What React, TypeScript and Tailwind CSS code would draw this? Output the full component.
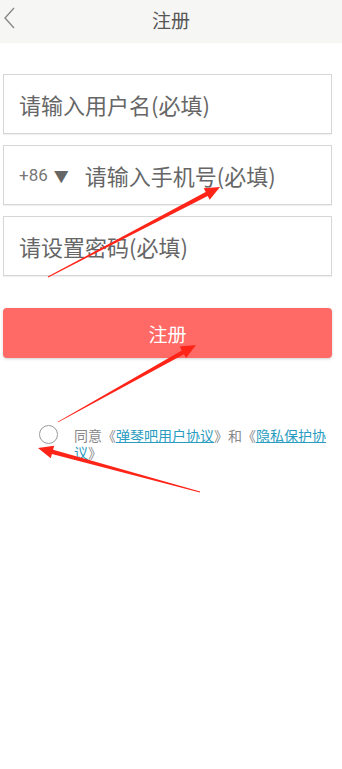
import React from "react";

type Pt = [number, number];

function arrowPoints(tail: Pt, tip: Pt, headLen = 15, headHalf = 6.5, shaftHalf = 2.2, tailHalf = 0.4): string {
  const dx = tip[0] - tail[0];
  const dy = tip[1] - tail[1];
  const len = Math.hypot(dx, dy);
  const ux = dx / len;
  const uy = dy / len;
  const nx = -uy;
  const ny = ux;
  const bx = tip[0] - ux * headLen;
  const by = tip[1] - uy * headLen;
  const pts: Pt[] = [
    [tail[0] + nx * tailHalf, tail[1] + ny * tailHalf],
    [bx + nx * shaftHalf, by + ny * shaftHalf],
    [bx + nx * headHalf, by + ny * headHalf],
    [tip[0], tip[1]],
    [bx - nx * headHalf, by - ny * headHalf],
    [bx - nx * shaftHalf, by - ny * shaftHalf],
    [tail[0] - nx * tailHalf, tail[1] - ny * tailHalf],
  ];
  return pts.map((p) => `${p[0].toFixed(1)},${p[1].toFixed(1)}`).join(" ");
}

const arrows: { tail: Pt; tip: Pt }[] = [
  { tail: [48, 277], tip: [220, 187] },
  { tail: [58, 422], tip: [196, 345] },
  { tail: [200, 492], tip: [38, 448] },
];

export default function App() {
  const font = { fontFamily: '"Noto Sans CJK SC", "Noto Sans", sans-serif' };
  return (
    <div className="relative w-[342px] h-[769px] bg-white overflow-hidden" style={font}>
      {/* Header */}
      <div className="relative h-[43px] bg-[#f6f6f4] flex items-center justify-center pb-[5px]">
        <svg className="absolute left-[2px] top-[6px]" width="14" height="24" viewBox="0 0 14 24">
          <path d="M12 2 L3 12 L12 22" fill="none" stroke="#8a8a8a" strokeWidth="1.4" />
        </svg>
        <span className="text-[19px] text-[#555] leading-none">注册</span>
      </div>

      {/* Form */}
      <div className="flex flex-col ml-[3px] mr-[10px] mt-[31px] gap-[11px]">
        <div className="h-[60px] border border-[#d6d6d6] flex items-center pl-[15px] shadow-[0_1px_1px_rgba(0,0,0,0.06)]">
          <span className="text-[22px] text-[#666] leading-none">请输入用户名(必填)</span>
        </div>
        <div className="h-[60px] border border-[#d6d6d6] flex items-center pl-[15px] shadow-[0_1px_1px_rgba(0,0,0,0.06)]">
          <span className="text-[17px] text-[#777] leading-none" style={{ fontFamily: '"Roboto", "Noto Sans", sans-serif' }}>+86</span>
          <span className="text-[15px] text-[#666] leading-none ml-[6px]">▼</span>
          <span className="text-[22px] text-[#666] leading-none ml-[16px]">请输入手机号(必填)</span>
        </div>
        <div className="h-[60px] border border-[#d6d6d6] flex items-center pl-[15px] shadow-[0_1px_1px_rgba(0,0,0,0.06)]">
          <span className="text-[22px] text-[#666] leading-none">请设置密码(必填)</span>
        </div>
      </div>

      {/* Button */}
      <div className="ml-[3px] mr-[10px] mt-[32px] h-[50px] rounded-[4px] bg-[#ff6a66] flex items-center justify-center shadow-[0_1px_3px_rgba(0,0,0,0.18)]">
        <span className="text-[19px] text-white leading-none">注册</span>
      </div>

      {/* Agreement */}
      <div className="flex items-start mt-[69px] pl-[39px] pr-[8px]">
        <div className="w-[19px] h-[19px] rounded-full border-[1.5px] border-[#999] shrink-0 mt-[-2px]" />
        <p className="ml-[16px] text-[14px] leading-[17px] text-[#888]">
          同意《<span className="text-[#2a9cc0] underline">弹琴吧用户协议</span>》和《<span className="text-[#2a9cc0] underline">隐私保护协议</span>》
        </p>
      </div>

      {/* Annotation arrows */}
      <svg className="absolute inset-0 pointer-events-none" width="342" height="769" viewBox="0 0 342 769">
        {arrows.map((a, i) => (
          <polygon key={i} points={arrowPoints(a.tail, a.tip)} fill="#ff2418" />
        ))}
      </svg>
    </div>
  );
}
